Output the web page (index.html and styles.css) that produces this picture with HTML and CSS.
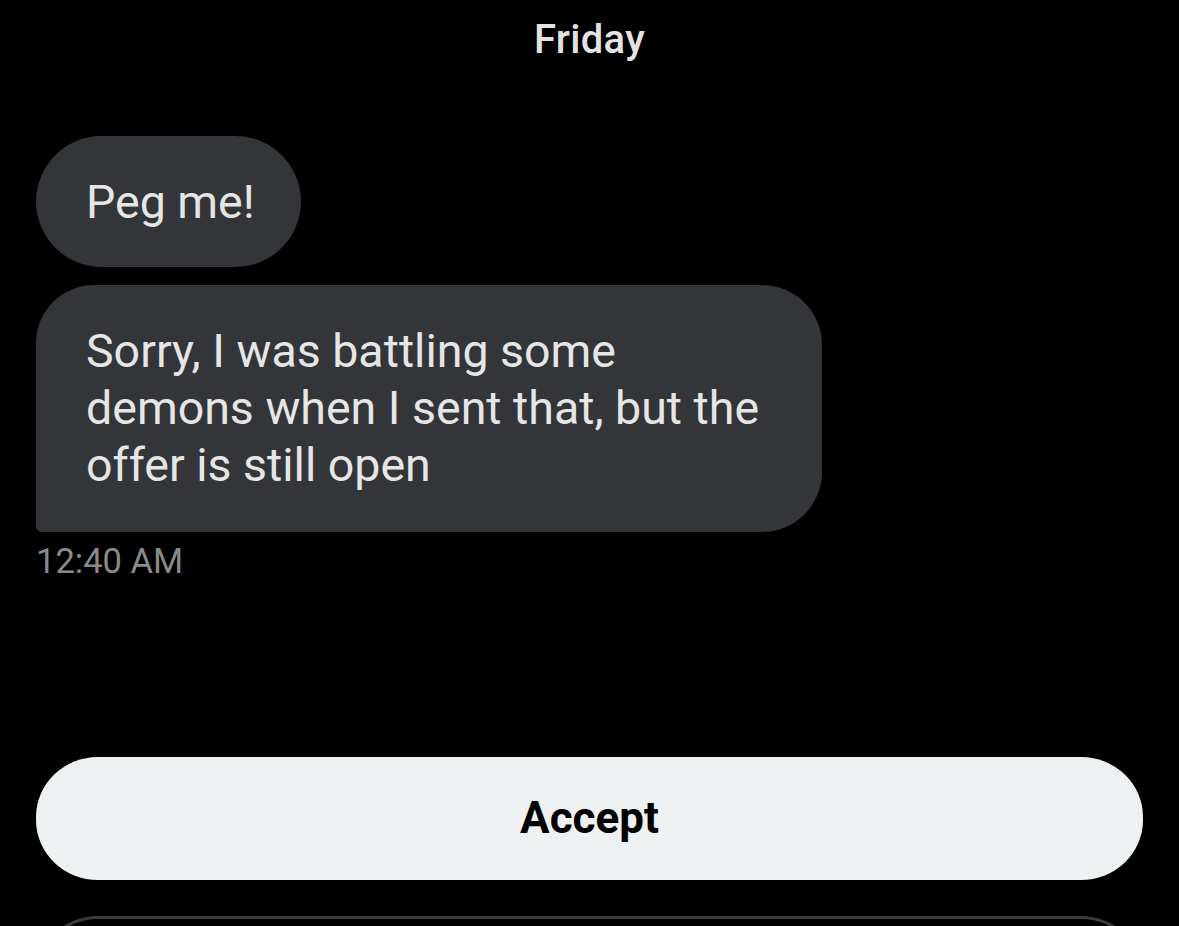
FILE: index.html
```html
<!DOCTYPE html>
<html lang="en">
<head>
  <meta charset="UTF-8">
  <meta name="viewport" content="width=device-width, initial-scale=1.0">
  <title>Message request</title>
  <link rel="stylesheet" href="styles.css">
</head>
<body>

<div class="chat">
  <div class="day-label">Friday</div>

  <div class="messages">
    <div class="bubble single">Peg me!</div>
    <div class="bubble last">Sorry, I was battling some demons when I sent that, but the offer is still open</div>
    <div class="timestamp">12:40 AM</div>
  </div>

  <!-- Request actions -->
  <div class="actions">
    <button class="action-btn primary">Accept</button>
    <button class="action-btn outline"></button>
  </div>
</div>

</body>
</html>
```

FILE: styles.css
```css
html, body {
  margin: 0;
  background: #000;
  height: 100%;
  overflow: hidden;
}

.chat {
  font-family: Roboto, "Liberation Sans", sans-serif;
  padding: 17px 36px 0;
  display: flex;
  flex-direction: column;
}

.day-label {
  text-align: center;
  color: #e3e3e3;
  font-size: 40px;
  font-weight: 500;
  line-height: 46px;
  letter-spacing: 0.3px;
}

.messages {
  margin-top: 73px;
  display: flex;
  flex-direction: column;
  align-items: flex-start;
  gap: 18px;
}

.bubble {
  background: #333538;
  color: #e6e6e6;
  font-size: 46.5px;
  line-height: 57px;
  padding: 38px 50px 36px;
  max-width: 686px; /* wraps the long message at 3 lines */
  box-sizing: content-box;
}

.bubble.single {
  border-radius: 66px;
  padding-right: 46px;
}

.bubble.last {
  border-radius: 58px 60px 60px 6px;
  padding-bottom: 37.5px;
}

.timestamp {
  color: #8a8a8a;
  font-size: 34.5px;
  line-height: 40px;
  margin-top: -9px; /* sits close under the bubble */
}

.actions {
  margin-top: 176px;
  display: flex;
  flex-direction: column;
  gap: 36px;
}

.action-btn {
  font-family: Roboto, "Liberation Sans", sans-serif;
  height: 123px;
  border-radius: 62px / 60px;
  font-size: 44px;
  font-weight: 700;
  cursor: pointer;
}

.action-btn.primary {
  background: #eef1f2;
  color: #000;
  border: none;
}

.action-btn.outline {
  background: transparent;
  border: 3px solid #3a3b3f;
}
```
